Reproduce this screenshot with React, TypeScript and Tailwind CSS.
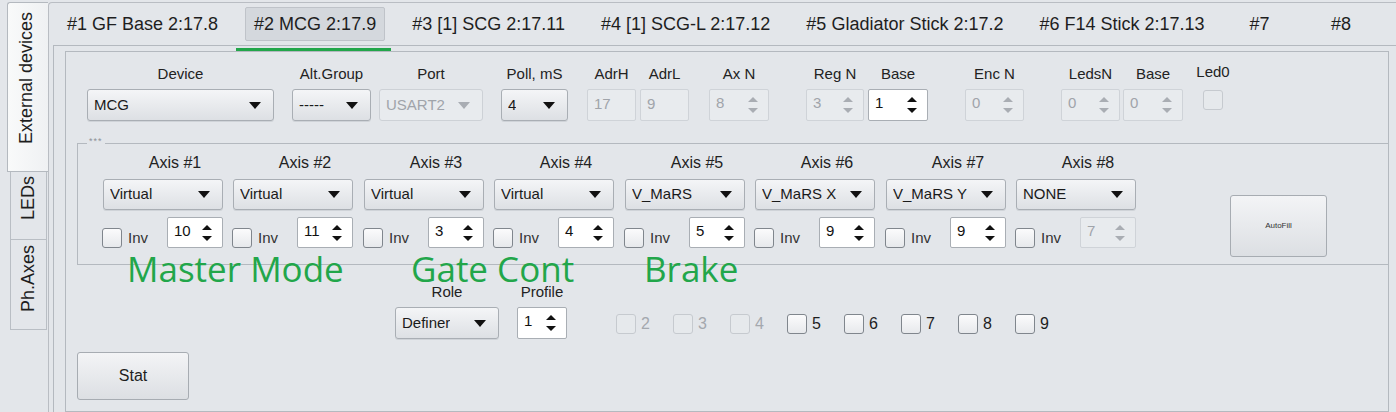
import React from "react";

type Cls = { className?: string };

function Caret({ disabled }: { disabled?: boolean }) {
  return (
    <svg width="12" height="7" viewBox="0 0 12 7" className="shrink-0">
      <path d="M0 0H12L6 7Z" fill={disabled ? "#a9adb3" : "#111"} />
    </svg>
  );
}

function SpinArrows({ disabled }: { disabled?: boolean }) {
  const c = disabled ? "#a9adb3" : "#111";
  return (
    <svg width="10" height="16" viewBox="0 0 10 16" className="shrink-0">
      <path d="M0 5L5 0L10 5Z" fill={c} />
      <path d="M0 11H10L5 16Z" fill={c} />
    </svg>
  );
}

function Combo({
  text,
  disabled,
  className = "",
}: { text: string; disabled?: boolean } & Cls) {
  const look = disabled
    ? "border-[#cdd1d6] bg-[#e8ebee] text-[#a0a4aa]"
    : "border-[#a9aeb4] bg-linear-to-b from-[#f4f5f7] to-[#dde0e4] text-[#1a1a1a] shadow-[0_1px_0_#cfd3d8]";
  return (
    <div
      className={`flex items-center justify-between rounded-[3px] border pl-[6px] pr-[12px] text-[15px] ${look} ${className}`}
    >
      <span className="truncate">{text}</span>
      <Caret disabled={disabled} />
    </div>
  );
}

function Field({
  text,
  disabled,
  className = "",
}: { text: string; disabled?: boolean } & Cls) {
  const look = disabled
    ? "border-[#cfd3d8] bg-[#e8ebee] text-[#a0a4aa]"
    : "border-[#a9aeb4] bg-white text-[#111]";
  return (
    <div
      className={`flex items-center rounded-[2px] border pl-[6px] pb-[1px] text-[15px] ${look} ${className}`}
    >
      {text}
    </div>
  );
}

function Spinner({
  value,
  disabled,
  className = "",
}: { value: string; disabled?: boolean } & Cls) {
  const look = disabled
    ? "border-[#cfd3d8] bg-[#e8ebee] text-[#a0a4aa]"
    : "border-[#a9aeb4] bg-white text-[#111]";
  return (
    <div
      className={`flex items-center justify-between rounded-[2px] border pl-[6px] pr-[10px] text-[15px] ${look} ${className}`}
    >
      <span className="pb-[3px]">{value}</span>
      <SpinArrows disabled={disabled} />
    </div>
  );
}

function Check({ disabled, className = "" }: { disabled?: boolean } & Cls) {
  const look = disabled
    ? "border-[#c6cacf] bg-[#e6e9ec]"
    : "border-[#80868d] bg-linear-to-b from-[#fbfbfc] to-[#e7e9ec]";
  return (
    <div
      className={`h-[20px] w-[20px] shrink-0 rounded-[3px] border ${look} ${className}`}
    />
  );
}

function TopCol({
  label,
  className = "",
  children,
}: { label: string; children: React.ReactNode } & Cls) {
  return (
    <div className={`flex flex-col items-center ${className}`}>
      <div className="whitespace-nowrap text-[15px] leading-[18px] text-[#222]">
        {label}
      </div>
      <div className="mt-[6px] flex w-full justify-center">{children}</div>
    </div>
  );
}

const axes = [
  { name: "Axis #1", mode: "Virtual", n: "10", ml: "" },
  { name: "Axis #2", mode: "Virtual", n: "11", ml: "ml-[10px]" },
  { name: "Axis #3", mode: "Virtual", n: "3", ml: "ml-[11px]" },
  { name: "Axis #4", mode: "Virtual", n: "4", ml: "ml-[10px]" },
  { name: "Axis #5", mode: "V_MaRS", n: "5", ml: "ml-[11px]" },
  { name: "Axis #6", mode: "V_MaRS X", n: "9", ml: "ml-[10px]" },
  { name: "Axis #7", mode: "V_MaRS Y", n: "9", ml: "ml-[11px]" },
  { name: "Axis #8", mode: "NONE", n: "7", ml: "ml-[10px]", off: true },
];

const tabs = [
  "#1 GF Base 2:17.8",
  "#2 MCG 2:17.9",
  "#3 [1] SCG 2:17.11",
  "#4 [1] SCG-L 2:17.12",
  "#5 Gladiator Stick 2:17.2",
  "#6 F14 Stick 2:17.13",
];

const slots = [
  { n: "2", off: true },
  { n: "3", off: true },
  { n: "4", off: true },
  { n: "5" },
  { n: "6" },
  { n: "7" },
  { n: "8" },
  { n: "9" },
];

export default function App() {
  return (
    <div className="relative flex h-[412px] w-[1396px] overflow-hidden bg-[#e3e6ea] font-['Liberation_Sans',Arial,sans-serif] text-[#1e1e1e]">
      {/* side tabs */}
      <div className="flex w-[48px] shrink-0 flex-col pt-[2px]">
        <div className="ml-[7px] flex h-[170px] w-[41px] items-start justify-center rounded-tl-[3px] border border-r-0 border-[#b4b9bf] bg-linear-to-r from-[#f9fafa] to-[#eff1f3] pt-[9px] pr-[5px]">
          <span className="rotate-180 whitespace-nowrap text-[18px] leading-[20px] [writing-mode:vertical-rl]">
            External devices
          </span>
        </div>
        <div className="ml-[10px] flex h-[68px] w-[37px] items-start justify-center border border-t-0 border-[#b9bec4] pt-[4px] pr-[2px]">
          <span className="rotate-180 whitespace-nowrap text-[18px] leading-[20px] [writing-mode:vertical-rl]">
            LEDs
          </span>
        </div>
        <div className="ml-[10px] flex h-[90px] w-[37px] items-start justify-center border border-t-0 border-[#b9bec4] pt-[5px] pr-[2px]">
          <span className="rotate-180 whitespace-nowrap text-[18px] leading-[20px] [writing-mode:vertical-rl]">
            Ph.Axes
          </span>
        </div>
      </div>

      {/* main area */}
      <div className="mt-[2px] flex flex-1 flex-col rounded-tl-[4px] border-l border-t border-[#b9bdc3]">
        {/* device tabs */}
        <div className="flex h-[42px] shrink-0 text-[18px] leading-[20px]">
          {tabs.map((t, i) =>
            i === 1 ? (
              <div key={t} className="relative px-[9px] pt-[4px]">
                <div className="flex h-[34px] items-center rounded-[2px] border border-[#bfc3c9] bg-[#d4d8dd] px-[8px]">
                  {t}
                </div>
                <div className="absolute left-0 top-[45px] h-[3px] w-[155px] bg-[#22a64a]" />
              </div>
            ) : (
              <div key={t} className="flex items-center whitespace-nowrap px-[18px]">
                {t}
              </div>
            )
          )}
          <div className="flex w-[74px] items-center justify-center">#7</div>
          <div className="flex w-[89px] items-center justify-center">#8</div>
        </div>

        {/* outer frame */}
        <div className="ml-[4px] flex flex-1 flex-col border-l border-t border-[#b4b9bf] pl-[11px] pr-[7px] pt-[5px]">
          <div className="flex flex-1 flex-col border border-[#b4b9bf]">
            {/* device settings row */}
            <div className="flex pl-[21px] pt-[13px]">
              <TopCol label="Device" className="w-[187px]">
                <Combo text="MCG" className="h-[32px] w-full" />
              </TopCol>
              <TopCol label="Alt.Group" className="ml-[18px] w-[79px]">
                <Combo text="-----" className="h-[32px] w-full" />
              </TopCol>
              <TopCol label="Port" className="ml-[8px] w-[104px]">
                <Combo text="USART2" disabled className="h-[32px] w-full" />
              </TopCol>
              <TopCol label="Poll, mS" className="ml-[18px] w-[67px]">
                <Combo text="4" className="h-[32px] w-full" />
              </TopCol>
              <TopCol label="AdrH" className="ml-[19px] w-[49px]">
                <Field text="17" disabled className="h-[32px] w-full" />
              </TopCol>
              <TopCol label="AdrL" className="ml-[4px] w-[49px]">
                <Field text="9" disabled className="h-[32px] w-full" />
              </TopCol>
              <TopCol label="Ax N" className="ml-[20px] w-[60px]">
                <Spinner value="8" disabled className="h-[32px] w-full" />
              </TopCol>
              <TopCol label="Reg N" className="ml-[37px] w-[58px]">
                <Spinner value="3" disabled className="h-[32px] w-full" />
              </TopCol>
              <TopCol label="Base" className="ml-[4px] w-[60px]">
                <Spinner value="1" className="h-[32px] w-full" />
              </TopCol>
              <TopCol label="Enc N" className="ml-[37px] w-[59px]">
                <Spinner value="0" disabled className="h-[32px] w-full" />
              </TopCol>
              <TopCol label="LedsN" className="ml-[37px] w-[59px]">
                <Spinner value="0" disabled className="h-[32px] w-full" />
              </TopCol>
              <TopCol label="Base" className="ml-[3px] w-[60px]">
                <Spinner value="0" disabled className="h-[32px] w-full" />
              </TopCol>
              <div className="ml-[12px] flex w-[36px] flex-col items-center">
                <div className="-mt-[2px] text-[15px] leading-[18px] text-[#222]">Led0</div>
                <Check disabled className="mt-[9px]" />
              </div>
            </div>

            {/* axes group */}
            <div className="relative ml-[11px] mt-[22px] flex h-[122px] shrink-0 border border-r-0 border-[#b4b9bf] pl-[25px] pt-[10px]">
              <div className="absolute -top-[8px] left-[9px] bg-[#e3e6ea] px-[2px] text-[9px] leading-[10px] tracking-[1px] text-[#8d9197]">
                ***
              </div>
              {axes.map((a) => (
                <div key={a.name} className={`flex w-[120px] flex-col ${a.ml}`}>
                  <div className="pl-[24px] text-center text-[16px] leading-[18px] text-[#222]">
                    {a.name}
                  </div>
                  <Combo text={a.mode} className="mt-[7px] h-[31px] w-full" />
                  <div className="mt-[7px] flex items-end justify-between">
                    <div className="-ml-[1px] flex h-[20px] items-center">
                      <Check />
                      <span className="ml-[6px] pt-[1px] text-[15px] text-[#333]">Inv</span>
                    </div>
                    <Spinner value={a.n} disabled={a.off} className="h-[31px] w-[56px]" />
                  </div>
                </div>
              ))}
              <div className="ml-[94px] mt-[41px] flex h-[62px] w-[97px] items-center justify-center rounded-[3px] border border-[#a7acb2] bg-linear-to-b from-[#f3f4f6] to-[#dcdfe3] text-[8px] text-[#333]">
                AutoFill
              </div>
            </div>

            {/* role / profile row */}
            <div className="mt-[18px] flex pl-[329px]">
              <TopCol label="Role" className="w-[104px]">
                <Combo text="Definer" className="h-[32px] w-full" />
              </TopCol>
              <TopCol label="Profile" className="ml-[18px] w-[50px]">
                <Spinner value="1" className="h-[32px] w-full" />
              </TopCol>
              <div className="mb-[3px] ml-[49px] flex self-end">
                {slots.map((s) => (
                  <div key={s.n} className="flex w-[57px] items-center">
                    <Check disabled={s.off} />
                    <span
                      className={`ml-[5px] text-[16px] ${s.off ? "text-[#a4a8ae]" : "text-[#1e1e1e]"}`}
                    >
                      {s.n}
                    </span>
                  </div>
                ))}
              </div>
            </div>

            {/* stat */}
            <div className="ml-[11px] mt-[13px] flex h-[48px] w-[112px] items-center justify-center rounded-[3px] border border-[#a7acb2] bg-linear-to-b from-[#f3f4f6] to-[#dcdfe3] text-[16px]">
              Stat
            </div>
          </div>
        </div>
      </div>

      {/* mode notes */}
      <div className="absolute left-[127px] top-[257px] whitespace-nowrap font-['Open_Sans',sans-serif] text-[35px] leading-[24px] text-[#22a64a]">
        Master Mode
      </div>
      <div className="absolute left-[411px] top-[257px] whitespace-nowrap font-['Open_Sans',sans-serif] text-[35px] leading-[24px] text-[#22a64a]">
        Gate Cont
      </div>
      <div className="absolute left-[644px] top-[257px] whitespace-nowrap font-['Open_Sans',sans-serif] text-[35px] leading-[24px] text-[#22a64a]">
        Brake
      </div>
    </div>
  );
}
